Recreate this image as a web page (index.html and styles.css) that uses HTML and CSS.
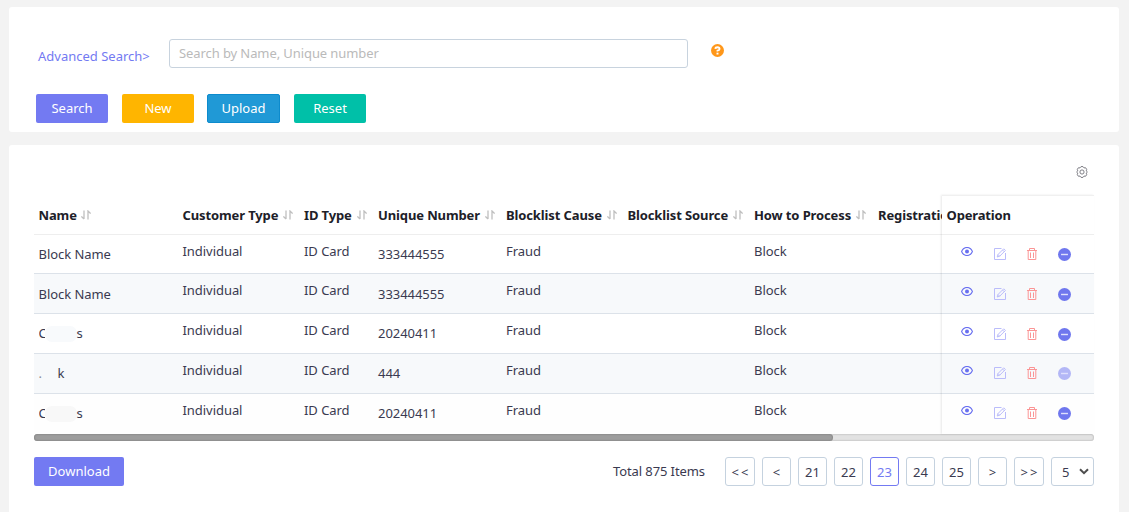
FILE: index.html
```html
<!DOCTYPE html>
<html lang="en">
<head>
<meta charset="utf-8">
<title>Blocklist</title>
<link rel="stylesheet" href="styles.css">
</head>
<body>
<svg class="defs" width="0" height="0" aria-hidden="true">
  <symbol id="sort" viewBox="0 0 10 10"><path d="M3 .5V9M.4 6.400 3 9M7 9.500V1L9.600 3.600" fill="none" stroke="currentColor" stroke-width="1.300"/></symbol>
  <symbol id="eye" viewBox="0 0 12 9"><path d="M.6 4.500C3-.9 9-.9 11.400 4.500C9 9.900 3 9.900.6 4.500Z" fill="none" stroke="currentColor" stroke-width="1.100"/><circle cx="6" cy="4.500" r="2" fill="currentColor"/></symbol>
  <symbol id="edit" viewBox="0 0 12 12"><path d="M7.500.5H.5V11.500H11.500V5M3.200 9 4 6.500 9.700.8 11.400 2.500 5.700 8.200ZM4 6.500 5.700 8.200M8.500 2 10.200 3.700" fill="none" stroke="currentColor"/></symbol>
  <symbol id="trash" viewBox="0 0 10 12"><path d="M0 2.500H10M2.500 2.500V.5H7.500V2.500M1.200 2.500V11.500H8.800V2.500M3.500 4.500V10M6.500 4.500V10" fill="none" stroke="currentColor"/></symbol>
  <symbol id="minus" viewBox="0 0 12 12"><circle cx="6" cy="6" r="6" fill="currentColor"/><path d="M2.800 6H9.200" stroke="#dfe0fd" stroke-width="1.300"/></symbol>
</svg>
<section class="panel search">
  <div class="search-row">
    <a class="advanced">Advanced Search&gt;</a>
    <input class="query" placeholder="Search by Name, Unique number">
    <svg class="help" viewBox="0 0 12 12"><circle cx="6" cy="6" r="6" fill="#ff9719"/><path d="M4 4.500Q4.100 3 6 3Q7.900 3 7.900 4.500Q7.900 5.400 6 6.200V7" fill="none" stroke="#fff" stroke-width="1.700"/><path d="M5.100 8H6.900V9.700H5.100Z" fill="#fff"/></svg>
  </div>
  <div class="buttons">
    <button class="btn primary">Search</button>
    <button class="btn new">New</button>
    <button class="btn upload">Upload</button>
    <button class="btn reset">Reset</button>
  </div>
</section>
<section class="panel results">
  <div class="tools">
    <svg class="gear" viewBox="0 0 12 12"><path d="M4 1.900 5 .6H7L8 1.900 9.700 1.800 10.700 3.400 10.200 4.900 11.400 6 10.200 7.100 10.700 8.600 9.700 10.200 8 10.100 7 11.400H5L4 10.100 2.300 10.200 1.300 8.600 1.800 7.100.6 6 1.800 4.900 1.300 3.400 2.300 1.800Z" fill="none" stroke="#707078" stroke-width=".9"/><circle cx="6" cy="6" r="2.100" fill="none" stroke="#707078" stroke-width=".9"/></svg>
  </div>
  <div class="grid">
    <div class="table">
      <div class="row head">
        <div>Name<svg><use href="#sort"/></svg></div><div>Customer Type<svg><use href="#sort"/></svg></div><div>ID Type<svg><use href="#sort"/></svg></div><div>Unique Number<svg><use href="#sort"/></svg></div><div>Blocklist Cause<svg><use href="#sort"/></svg></div><div>Blocklist Source<svg><use href="#sort"/></svg></div><div>How to Process<svg><use href="#sort"/></svg></div><div>Registratio</div>
      </div>
      <div class="row first"><div class="low">Block Name</div><div>Individual</div><div>ID Card</div><div class="low">333444555</div><div>Fraud</div><div></div><div>Block</div><div></div></div>
      <div class="row alt"><div class="low">Block Name</div><div>Individual</div><div>ID Card</div><div class="low">333444555</div><div>Fraud</div><div></div><div>Block</div><div></div></div>
      <div class="row"><div class="low"><span class="cut">C</span><span class="mask"></span>s</div><div>Individual</div><div>ID Card</div><div class="low">20240411</div><div>Fraud</div><div></div><div>Block</div><div></div></div>
      <div class="row alt"><div class="low"><span class="dot">.</span>k</div><div>Individual</div><div>ID Card</div><div class="low">444</div><div>Fraud</div><div></div><div>Block</div><div></div></div>
      <div class="row last"><div class="low"><span class="cut">C</span><span class="mask grey"></span>s</div><div>Individual</div><div>ID Card</div><div class="low">20240411</div><div>Fraud</div><div></div><div>Block</div><div></div></div>
    </div>
    <div class="ops">
      <div class="op-head">Operation</div>
      <div class="op first"><svg class="eye"><use href="#eye"/></svg><svg class="edit"><use href="#edit"/></svg><svg class="trash"><use href="#trash"/></svg><svg class="minus"><use href="#minus"/></svg></div>
      <div class="op alt"><svg class="eye"><use href="#eye"/></svg><svg class="edit"><use href="#edit"/></svg><svg class="trash"><use href="#trash"/></svg><svg class="minus"><use href="#minus"/></svg></div>
      <div class="op"><svg class="eye"><use href="#eye"/></svg><svg class="edit"><use href="#edit"/></svg><svg class="trash"><use href="#trash"/></svg><svg class="minus"><use href="#minus"/></svg></div>
      <div class="op alt raised"><svg class="eye"><use href="#eye"/></svg><svg class="edit"><use href="#edit"/></svg><svg class="trash"><use href="#trash"/></svg><svg class="minus off"><use href="#minus"/></svg></div>
      <div class="op last raised"><svg class="eye"><use href="#eye"/></svg><svg class="edit"><use href="#edit"/></svg><svg class="trash"><use href="#trash"/></svg><svg class="minus"><use href="#minus"/></svg></div>
    </div>
  </div>
  <div class="scroll"><div class="thumb"></div></div>
  <div class="footer">
    <button class="btn primary download">Download</button>
    <span class="total">Total 875 Items</span>
    <div class="pages">
      <span class="page arrows">&lt;&lt;</span><span class="page">&lt;</span><span class="page">21</span><span class="page">22</span><span class="page current">23</span><span class="page">24</span><span class="page">25</span><span class="page">&gt;</span><span class="page arrows">&gt;&gt;</span>
      <span class="page size">5<svg viewBox="0 0 10 7"><path d="M1 1.200 5 5.200 9 1.200" fill="none" stroke="#4d4d4d" stroke-width="2"/></svg></span>
    </div>
  </div>
</section>
</body>
</html>
```
FILE: styles.css
```css
* { box-sizing: border-box; }
body { margin: 0; padding: 7px 10px 0 9px; height: 512px; overflow: hidden; background: #f3f3f3; font: 13px/20px "Noto Sans", sans-serif; color: #3a3a50; }
.defs { display: none; }
svg { display: block; flex: none; }
.panel { background: #fff; border-radius: 3px; }
.search { height: 125px; padding: 32px 0 0 27px; }
.search-row { display: flex; height: 29px; }
.advanced { width: 133px; padding: 7px 0 0 2px; color: #737af2; white-space: nowrap; }
.query { width: 519px; height: 29px; padding: 0 9px 1px; border: 1px solid #c8d3de; border-radius: 3px; font: inherit; letter-spacing: -.09px; outline: 0; }
.query::placeholder { color: #bababa; opacity: 1; }
.help { width: 13px; height: 13px; margin: 5px 0 0 23px; }
.buttons { display: flex; gap: 14px; margin-top: 26px; }
.btn { width: 72px; height: 29px; padding: 0 0 2px; border: 0; border-radius: 2px; color: #fff; font: inherit; text-align: center; }
.primary { background: #737af2; }
.new { background: #ffb500; }
.upload { width: 73px; margin: 0 0 0 -1px; background: #2099d6; border: 1px solid #0d8bcd; }
.reset { background: #00c0a8; }
.results { height: 380px; margin-top: 13px; padding: 0 25px; }
.tools { display: flex; justify-content: flex-end; height: 50px; padding: 21px 6px 0 0; }
.gear { width: 12px; height: 12px; }
.grid { display: grid; grid-template-columns: 908px 152px; height: 239px; }
.table { overflow: hidden; }
.row { display: grid; grid-template-columns: 144px 121.500px 74px 128px 121.500px 126.500px 124px 110px; height: 40px; border-bottom: 1px solid #dce2e9; white-space: nowrap; }
.row > div { padding: 6px 0 0 4.500px; letter-spacing: -.05px; }
.row > .low { padding-top: 9px; display: flex; }
.head { border-color: #eee; color: #202028; font-weight: 700; }
.head > div { display: flex; gap: 5px; }
.head svg { width: 10px; height: 10px; margin-top: 5px; color: #bfbfbf; }
.head > div:first-child svg { margin-left: -1px; }
.row.head > div { padding-top: 10px; letter-spacing: -.12px; }
.row.first { height: 39px; }
.row.alt > .low { padding-top: 10px; }
.row.alt ~ .row.alt > .low { padding-top: 9px; }
.alt { background: #f7f9fb; }
.last { border: 0; background: #fefefe; }
.cut { width: 6px; overflow: hidden; }
.mask { width: 32px; height: 16px; margin-top: 3px; background: #f8fafc; border-radius: 7px; }
.grey { background: #f8f8f8; }
.dot { width: 19px; color: #8c8c96; }
.ops { border-top: 1px solid #f0f0f0; box-shadow: -1px 0 2px rgba(0,0,0,.09); background: #fff; }
.op-head { height: 39px; padding: 9px 0 0 4.500px; border-bottom: 1px solid #eee; color: #202028; font-weight: 700; letter-spacing: -.15px; }
.op { display: flex; height: 40px; padding: 13px 0 0 19px; border-bottom: 1px solid #dce2e9; }
.op.first { height: 39px; padding-top: 12px; }
.op.last { border: 0; }
.op.raised { padding-top: 12px; }
.eye { width: 12px; height: 9px; color: #686ff0; }
.edit { width: 12px; height: 12px; margin: 1px 0 0 21px; color: #babcfa; }
.trash { width: 10px; height: 12px; margin: 1px 0 0 21px; color: #fb9595; }
.minus { width: 13px; height: 13px; margin: 1px 0 0 21px; color: #6f77ee; }
.off { color: #b3b7f6; }
.scroll { height: 7px; border-radius: 4px; background: #e2e2e2; box-shadow: inset 0 0 2px rgba(0,0,0,.3); }
.thumb { width: 799px; height: 7px; border-radius: 4px; background: #9d9d9d; box-shadow: inset 0 0 2px rgba(0,0,0,.3); }
.footer { display: flex; margin-top: 16px; height: 29px; }
.download { width: 90px; }
.total { margin-left: auto; padding-top: 4px; width: 112px; white-space: nowrap; letter-spacing: -.1px; }
.pages { display: flex; gap: 7px; }
.page { width: 29px; height: 29px; border: 1px solid #c5d2df; border-radius: 3px; text-align: center; padding-top: 4px; }
.arrows { width: 30px; letter-spacing: 2px; padding-left: 2px; }
.current { border-color: #737af2; color: #737af2; }
.size { display: flex; width: 43px; padding-left: 10px; }
.size svg { width: 10px; height: 7px; margin: 6px 0 0 10px; }
```
